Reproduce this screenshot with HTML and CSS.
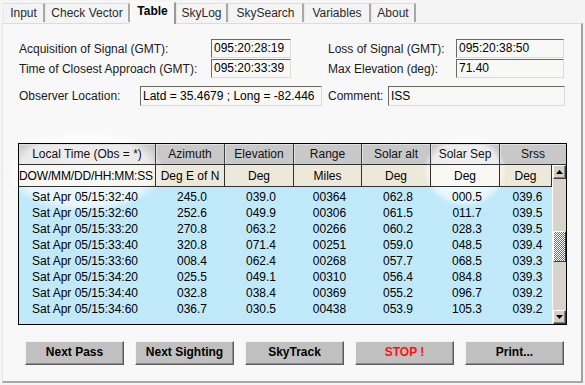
FILE: index.html
```html
<!DOCTYPE html>
<html>
<head>
<meta charset="utf-8">
<link rel="stylesheet" href="styles.css">
</head>
<body>
<div class="app">
  <div class="tabs">
    <div class="tab w-input">Input</div>
    <div class="tab w-check">Check Vector</div>
    <div class="tab tab-active w-table">Table</div>
    <div class="tab w-skylog">SkyLog</div>
    <div class="tab w-skysearch">SkySearch</div>
    <div class="tab w-variables">Variables</div>
    <div class="tab w-about">About</div>
  </div>
  <div class="panel">
    <div class="fields">
      <div class="row">
        <span class="label l-a">Acquisition of Signal (GMT):</span>
        <span class="box b-a">095:20:28:19</span>
        <span class="label l-b">Loss of Signal (GMT):</span>
        <span class="box b-b">095:20:38:50</span>
      </div>
      <div class="row row2">
        <span class="label l-a">Time of Closest Approach (GMT):</span>
        <span class="box b-a">095:20:33:39</span>
        <span class="label l-b">Max Elevation (deg):</span>
        <span class="box b-b">71.40</span>
      </div>
      <div class="row row3">
        <span class="label l-obs">Observer Location:</span>
        <span class="box b-obs">Latd = 35.4679 ; Long = -82.446</span>
        <span class="label l-com">Comment:</span>
        <span class="box b-com">ISS</span>
      </div>
    </div>

    <div class="table">
      <div class="thead">
        <div class="th">Local Time (Obs = *)</div>
        <div class="th">Azimuth</div>
        <div class="th">Elevation</div>
        <div class="th">Range</div>
        <div class="th">Solar alt</div>
        <div class="th">Solar Sep</div>
        <div class="th">Srss</div>
      </div>
      <div class="tbody">
        <div class="tmain">
          <div class="units">
            <div class="u u-left">DOW/MM/DD/HH:MM:SS</div>
            <div class="u">Deg E of N</div>
            <div class="u">Deg</div>
            <div class="u">Miles</div>
            <div class="u">Deg</div>
            <div class="u">Deg</div>
            <div class="u">Deg</div>
          </div>
          <div class="data">
            <div class="tr"><span>Sat Apr 05/15:32:40</span><span>245.0</span><span>039.0</span><span>00364</span><span>062.8</span><span>000.5</span><span>039.6</span></div>
            <div class="tr"><span>Sat Apr 05/15:32:60</span><span>252.6</span><span>049.9</span><span>00306</span><span>061.5</span><span>011.7</span><span>039.5</span></div>
            <div class="tr"><span>Sat Apr 05/15:33:20</span><span>270.8</span><span>063.2</span><span>00266</span><span>060.2</span><span>028.3</span><span>039.5</span></div>
            <div class="tr"><span>Sat Apr 05/15:33:40</span><span>320.8</span><span>071.4</span><span>00251</span><span>059.0</span><span>048.5</span><span>039.4</span></div>
            <div class="tr"><span>Sat Apr 05/15:33:60</span><span>008.4</span><span>062.4</span><span>00268</span><span>057.7</span><span>068.5</span><span>039.3</span></div>
            <div class="tr"><span>Sat Apr 05/15:34:20</span><span>025.5</span><span>049.1</span><span>00310</span><span>056.4</span><span>084.8</span><span>039.3</span></div>
            <div class="tr"><span>Sat Apr 05/15:34:40</span><span>032.8</span><span>038.4</span><span>00369</span><span>055.2</span><span>096.7</span><span>039.2</span></div>
            <div class="tr"><span>Sat Apr 05/15:34:60</span><span>036.7</span><span>030.5</span><span>00438</span><span>053.9</span><span>105.3</span><span>039.2</span></div>
          </div>
        </div>
        <div class="scrollbar">
          <div class="sb-btn"><svg width="7" height="4" viewBox="0 0 7 4"><path d="M3.5 0 L7 4 L0 4 Z" fill="#000"/></svg></div>
          <div class="sb-track"><div class="sb-thumb"></div></div>
          <div class="sb-btn"><svg width="7" height="4" viewBox="0 0 7 4"><path d="M0 0 L7 0 L3.5 4 Z" fill="#000"/></svg></div>
        </div>
      </div>
    </div>

    <div class="buttons">
      <div class="btn">Next Pass</div>
      <div class="btn">Next Sighting</div>
      <div class="btn">SkyTrack</div>
      <div class="btn btn-stop">STOP !</div>
      <div class="btn">Print...</div>
    </div>
  </div>
</div>
</body>
</html>
```

FILE: styles.css
```css
* { box-sizing: border-box; }
html, body {
  margin: 0;
  padding: 0;
  background: #f4f4f4;
  font-family: "Liberation Sans", Arial, sans-serif;
  font-size: 12px;
  color: #000;
}
.app {
  width: 585px;
  height: 385px;
}
.tabs {
  display: flex;
  align-items: flex-end;
  height: 23px;
  padding-left: 3px;
  position: relative;
  z-index: 2;
}
.tab {
  height: 19px;
  line-height: 18px;
  text-align: center;
  color: #2a2a2a;
  background: #f4f4f4;
  border-top: 1px solid #e0e0e0;
  border-left: 1px solid #e8e8e8;
  border-right: 2px solid #a8a8a8;
  margin-bottom: 1px;
}
.tab-active {
  height: 22px;
  line-height: 17px;
  font-weight: bold;
  background: #f8f8f8;
  border-top: 1px solid #fff;
  border-left: 1px solid #fff;
  border-right: 2px solid #9a9a9a;
  margin-bottom: -1px;
  color: #000;
}
.w-input { width: 42px; }
.w-check { width: 85px; }
.w-table { width: 46px; }
.w-skylog { width: 52px; }
.w-skysearch { width: 76px; }
.w-variables { width: 67px; }
.w-about { width: 45px; }

/* the white light spots of the capture, painted behind text */
.panel, .th, .u, .data {
  background-image:
    radial-gradient(ellipse 80px 42px at 85px 171px, rgba(255,255,255,0.72) 0%, rgba(255,255,255,0.62) 82%, rgba(255,255,255,0) 100%),
    radial-gradient(ellipse 42px 36px at 465px 171px, rgba(255,255,255,0.78) 0%, rgba(255,255,255,0.65) 82%, rgba(255,255,255,0) 100%);
  background-attachment: fixed, fixed;
}

.panel {
  position: relative;
  margin-left: 2px;
  width: 581px;
  height: 360px;
  background-color: #f8f8f8;
  border-top: 1px solid #dcdcdc;
  border-left: 1px solid #e4e4e4;
  border-right: 2px solid #a0a0a0;
  border-bottom: 2px solid #a8a8a8;
  overflow: hidden;
}
.fields {
  padding-top: 15px;
  padding-left: 16px;
}
.row {
  display: flex;
  align-items: center;
  height: 19px;
}
.row2 { margin-top: 1px; }
.row3 { margin-top: 8px; height: 20px; }
.label {
  color: #1a1a1a;
  white-space: nowrap;
}
.l-a { width: 192px; }
.l-b { width: 128px; margin-left: 37px; }
.l-obs { width: 121px; }
.l-com { width: 60px; margin-left: 6px; }
.box {
  height: 100%;
  line-height: 17px;
  padding-left: 2px;
  background: #f8f8f6;
  border-top: 1px solid #6a6a5e;
  border-left: 1px solid #6a6a5e;
  border-right: 1px solid #dcdcd4;
  border-bottom: 1px solid #dcdcd4;
  white-space: nowrap;
  overflow: hidden;
}
.b-a { width: 80px; }
.b-b { width: 108px; }
.b-obs { width: 182px; line-height: 18px; }
.b-com { width: 177px; line-height: 18px; }

.table {
  margin-top: 37px;
  margin-left: 15px;
  width: 549px;
  height: 182px;
  border: 1px solid #000;
  display: flex;
  flex-direction: column;
}
.thead {
  display: grid;
  grid-template-columns: 137px 69px 69px 68px 69px 69px 66px;
  height: 21px;
  border-bottom: 1px solid #303030;
}
.th {
  background-color: #c8c8c8;
  border-right: 1px solid #404040;
  text-align: center;
  line-height: 20px;
  color: #111;
  box-shadow: inset 1px 1px 0 #e0e0e0;
}
.th:last-child { border-right: none; }
.tbody {
  display: flex;
  flex: 1;
}
.tmain {
  width: 533px;
  display: flex;
  flex-direction: column;
}
.units {
  display: grid;
  grid-template-columns: 137px 69px 69px 68px 69px 69px 52px;
  height: 22px;
  border-bottom: 1px solid #303030;
}
.u {
  background-color: #ece9da;
  border-right: 1px solid #303030;
  text-align: center;
  line-height: 22px;
  white-space: nowrap;
  overflow: hidden;
}
.u-left {
  text-align: left;
  letter-spacing: -0.15px;
}
.data {
  flex: 1;
  background-color: #c0e9f9;
  padding-top: 2px;
}
.tr {
  display: grid;
  grid-template-columns: 137px 69px 69px 68px 69px 69px 52px;
  height: 16px;
  line-height: 16px;
}
.tr span {
  text-align: center;
  padding-left: 3px;
}
.tr span:first-child { padding-left: 0; padding-right: 5px; }
.scrollbar {
  width: 14px;
  display: flex;
  flex-direction: column;
  background: #d8d4cc;
  border-left: 1px solid #fff;
}
.sb-btn {
  height: 14px;
  background: #d4d0c8;
  border-top: 1px solid #fff;
  border-left: 1px solid #fff;
  border-right: 1px solid #404040;
  border-bottom: 1px solid #404040;
  box-shadow: inset -1px -1px 0 #808080;
  display: flex;
  align-items: center;
  justify-content: center;
}
.sb-track {
  flex: 1;
  padding-top: 52px;
}
.sb-thumb {
  height: 31px;
  border-top: 1px solid #fff;
  border-left: 1px solid #fff;
  border-right: 1px solid #404040;
  border-bottom: 1px solid #404040;
  background-color: #fff;
  background-image: repeating-conic-gradient(#707070 0% 25%, #ffffff 0% 50%);
  background-size: 2px 2px;
}

.buttons {
  display: flex;
  gap: 11px;
  margin-top: 16px;
  margin-left: 22px;
}
.btn {
  width: 99px;
  height: 24px;
  background: #c0c0c0;
  border-top: 1px solid #f4f4ec;
  border-left: 1px solid #f4f4ec;
  border-right: 1px solid #5a5a5a;
  border-bottom: 1px solid #5a5a5a;
  box-shadow: inset -1px -1px 0 #8c8c8c;
  text-align: center;
  line-height: 21px;
  font-weight: bold;
  color: #000;
}
.btn-stop { color: #ff1010; }
```
